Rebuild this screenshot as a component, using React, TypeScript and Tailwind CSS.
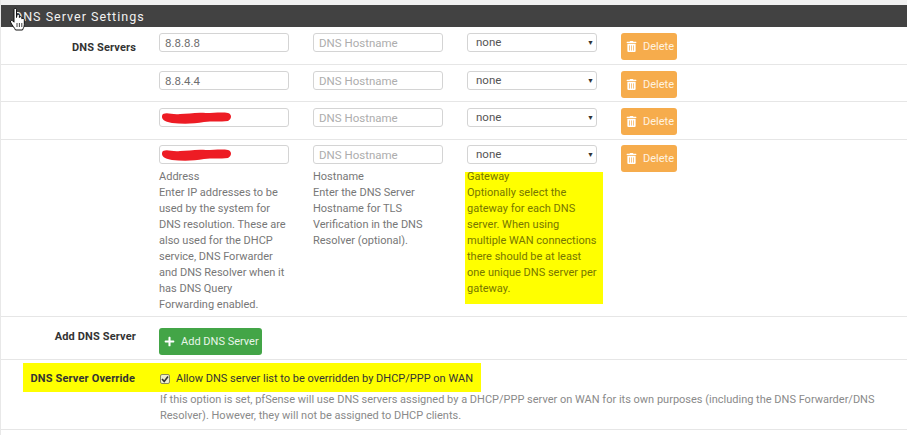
import { FaPlus, FaTrashAlt } from "react-icons/fa";

const FONT = "font-['Roboto','Liberation_Sans',sans-serif]";

// hand cursor left on the panel title
function HandCursor() {
  return (
    <svg className="absolute left-[8px] top-[7px]" width="19" height="24" viewBox="0 0 19 24">
      <path
        d="M5 2.5C5 1 7.5 1 7.5 2.5V10.5L8 8C8.5 6.8 10.3 7 10.4 8.4V10.5C10.8 9.3 12.7 9.4 12.9 10.8V12C13.4 11 15.2 11.2 15.3 12.6V17.5C15.3 20 14 21.5 13.5 23H6.5C6 21.5 2.5 17.5 1.5 15C1 13.5 2.6 12.7 3.7 13.8L5 15.2Z"
        fill="#fff"
        stroke="#111"
        strokeWidth="1"
        strokeLinejoin="round"
      />
      <path d="M8 16V20M10.4 16V20M12.8 16V20" stroke="#111" strokeWidth="0.8" />
    </svg>
  );
}

function RedScribble({ className }: { className: string }) {
  return (
    <svg className={className} width="70" height="14" viewBox="0 0 70 14">
      <path
        d="M1 3C6 1 10 4 18 3C26 3 34 1 44 2C52 2 60 1 66 2C70 3 70 8 66 10C58 11 50 10 42 11C32 13 20 13 10 12C4 11 0 9 0 6C0 5 0 4 1 3Z"
        fill="#ed1c24"
      />
    </svg>
  );
}

function TextBox({ value, scribble }: { value?: string; scribble?: boolean }) {
  return (
    <div className="relative w-[130px] h-[19px] shrink-0 rounded-[3px] border border-[#d4d4d4] bg-white pl-[5px] text-[11.5px] leading-[18px] text-[#6f6f6f]">
      {value}
      {scribble && <RedScribble className="absolute left-[2px] top-[2px]" />}
    </div>
  );
}

function HostBox() {
  return (
    <div className="w-[130px] h-[19px] shrink-0 rounded-[3px] border border-[#d4d4d4] bg-white pl-[5px] text-[11.5px] leading-[18px] text-[#adadad]">
      DNS Hostname
    </div>
  );
}

function GatewaySelect() {
  return (
    <div className="flex items-center justify-between w-[130px] h-[19px] shrink-0 rounded-[3px] border border-[#d4d4d4] bg-white pl-[8px] pr-[2px] pt-[1px] text-[11.5px] text-[#555]">
      <span>none</span>
      <span className="text-[7px] text-[#333]">▼</span>
    </div>
  );
}

function DeleteButton() {
  return (
    <div className="flex items-center w-[56px] h-[27px] shrink-0 rounded-[3px] bg-[#f6ac4c] pl-[5px] text-[11px] text-[#fff3e0]">
      <FaTrashAlt size={11} className="text-white mr-[6px]" />
      <span className="pt-[1px]">Delete</span>
    </div>
  );
}

function ServerRow({
  label,
  value,
  scribble,
  height,
}: {
  label?: string;
  value?: string;
  scribble?: boolean;
  height: string;
}) {
  return (
    <div className={`flex border-b border-[#e6e6e6] pt-[6px] ${height}`}>
      <div className="w-[135px] shrink-0 pt-[7px] text-right text-[11px] tracking-[0.15px] font-bold text-[#333]">{label}</div>
      <div className="flex gap-[24px] ml-[23px]">
        <TextBox value={value} scribble={scribble} />
        <HostBox />
        <GatewaySelect />
        <DeleteButton />
      </div>
    </div>
  );
}

export default function App() {
  return (
    <div className={`${FONT} relative w-[907px] h-[435px] overflow-hidden bg-white border-l border-[#e8e8e8]`}>
      <div className="h-[5px] bg-[#f1f1f1]" />
      <div className="h-[22px] bg-[#424242] pl-[13px] text-[12.5px] leading-[23px] tracking-[1px] text-[#f2f2f2]">
        DNS Server Settings
      </div>
      <HandCursor />

      <ServerRow label="DNS Servers" value="8.8.8.8" height="h-[38px]" />
      <ServerRow value="8.8.4.4" height="h-[37px]" />
      <ServerRow scribble height="h-[38px]" />

      <div className="flex border-b border-[#e6e6e6] pt-[5px] h-[177px]">
        <div className="w-[135px] shrink-0" />
        <div className="flex gap-[24px] ml-[23px]">
          <div className="w-[130px] shrink-0">
            <TextBox scribble />
            <p className="mt-[5px] text-[11px] leading-[16px] text-[#777]">
              Address
              <br />
              Enter IP addresses to be used by the system for DNS resolution. These are also used for the DHCP service,
              DNS Forwarder and DNS Resolver when it has DNS Query Forwarding enabled.
            </p>
          </div>
          <div className="w-[130px] shrink-0">
            <HostBox />
            <p className="mt-[5px] text-[11px] leading-[16px] text-[#777]">
              Hostname
              <br />
              Enter the DNS Server Hostname for TLS Verification in the DNS Resolver (optional).
            </p>
          </div>
          <div className="w-[130px] shrink-0">
            <GatewaySelect />
            <div className="flex flex-col -ml-[2px] mt-[8px] w-[138px] h-[132px] bg-[#ffff00] pl-[2px] pr-[3px]">
              <p className="-mt-[3px] text-[11px] leading-[16px] text-[#777700]">
                Gateway
                <br />
                Optionally select the gateway for each DNS server. When using multiple WAN connections there should be at
                least one unique DNS server per gateway.
              </p>
            </div>
          </div>
          <DeleteButton />
        </div>
      </div>

      <div className="flex border-b border-[#e6e6e6] pt-[11px] h-[43px]">
        <div className="w-[135px] shrink-0 pt-[1px] text-right text-[11px] tracking-[0.15px] font-bold text-[#333]">Add DNS Server</div>
        <div className="flex items-center ml-[23px] w-[103px] h-[27px] rounded-[3px] bg-[#43a547] pl-[5px] whitespace-nowrap text-[11px] text-[#e8f5e9]">
          <FaPlus size={11} className="text-white mr-[6px]" />
          <span className="pt-[1px]">Add DNS Server</span>
        </div>
      </div>

      <div className="border-b border-[#e6e6e6] pt-[3px] h-[70px]">
        <div className="flex items-center ml-[22px] w-[458px] h-[29px] bg-[#ffff00] pt-[3px]">
          <div className="w-[112px] shrink-0 text-right text-[11px] tracking-[0.15px] font-bold text-[#333]">DNS Server Override</div>
          <span className="flex items-center justify-center ml-[25px] w-[10px] h-[10px] rounded-[2px] border border-[#8a8a5a] bg-[#eeeecc] text-[#333]">
            <svg width="8" height="8" viewBox="0 0 8 8">
              <path d="M1 4L3.2 6.4L7 1.4" fill="none" stroke="#333" strokeWidth="1.6" />
            </svg>
          </span>
          <span className="ml-[6px] whitespace-nowrap text-[11px] text-[#333]">Allow DNS server list to be overridden by DHCP/PPP on WAN</span>
        </div>
        <p className="ml-[159px] mt-[0px] w-[730px] text-[11px] leading-[16px] text-[#8a8a8a]">
          If this option is set, pfSense will use DNS servers assigned by a DHCP/PPP server on WAN for its own purposes
          (including the DNS Forwarder/DNS Resolver). However, they will not be assigned to DHCP clients.
        </p>
      </div>
    </div>
  );
}
